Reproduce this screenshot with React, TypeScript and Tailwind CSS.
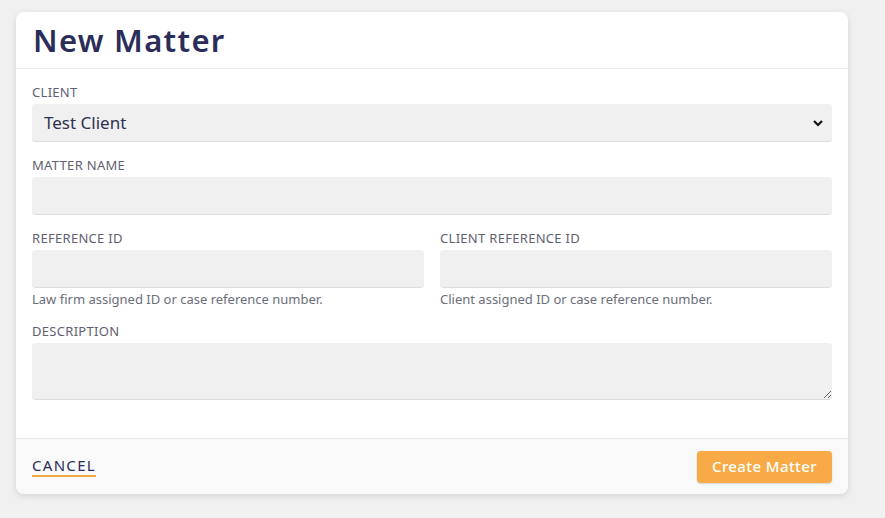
import React from 'react';

const font = { fontFamily: '"Noto Sans", "DejaVu Sans", sans-serif' };

function Label({ children }: { children: React.ReactNode }) {
  return <label className="block text-[13px] leading-[16px] uppercase tracking-[0.3px] text-[#5f6170] mb-[4px]">{children}</label>;
}

function Help({ children }: { children: React.ReactNode }) {
  return <p className="text-[13px] leading-[16px] text-[#6c6e7a] mt-[3px]">{children}</p>;
}

const inputCls =
  'block w-full h-[38px] rounded-[4px] bg-[#f0f0f0] border-0 border-b border-[#dddddd] px-[12px] text-[17px] text-[#2f3152] outline-none';

export default function App() {
  return (
    <div className="min-h-screen bg-[#f0f0f0] pt-[12px] pl-[16px] pr-[37px]" style={font}>
      <div className="bg-white rounded-[8px] shadow-[0_2px_6px_rgba(0,0,0,0.12)] overflow-hidden">
        <div className="h-[57px] px-[17px] flex items-center border-b border-[#ebebeb]">
          <h1 className="text-[31px] font-semibold text-[#2b2d59] tracking-[1.3px]">New Matter</h1>
        </div>

        <div className="px-[16px] pt-[15px] pb-[38px] flex flex-col">
          <div>
            <Label>Client</Label>
            <div className="relative">
              <select className={`${inputCls} appearance-none`} defaultValue="test">
                <option value="test">Test Client</option>
              </select>
              <svg className="absolute right-[8px] top-[14px] pointer-events-none" width="12" height="10" viewBox="0 0 12 10">
                <path d="M2 3 L6 7 L10 3" fill="none" stroke="#111" strokeWidth="2.2" />
              </svg>
            </div>
          </div>

          <div className="mt-[15px]">
            <Label>Matter Name</Label>
            <input className={inputCls} />
          </div>

          <div className="mt-[15px] grid grid-cols-2 gap-[16px]">
            <div>
              <Label>Reference ID</Label>
              <input className={inputCls} />
              <Help>Law firm assigned ID or case reference number.</Help>
            </div>
            <div>
              <Label>Client Reference ID</Label>
              <input className={inputCls} />
              <Help>Client assigned ID or case reference number.</Help>
            </div>
          </div>

          <div className="mt-[16px]">
            <Label>Description</Label>
            <textarea className="block w-full h-[57px] rounded-[4px] bg-[#f0f0f0] border-0 border-b border-[#dddddd] px-[12px] py-[8px] text-[16px] outline-none resize-y" />
          </div>
        </div>

        <div className="h-[56px] bg-[#f9f9f9] border-t border-[#ebebeb] px-[16px] flex items-center justify-between">
          <button className="text-[15px] text-[#2b2d59] uppercase tracking-[1.3px] border-b-[2px] border-[#f5a742] leading-[18px] pb-[1px]">Cancel</button>
          <button className="w-[135px] h-[32px] rounded-[4px] bg-[#f7aa45] text-white text-[15px] font-medium tracking-[0.4px] shadow-[0_1px_2px_rgba(0,0,0,0.15)]">Create Matter</button>
        </div>
      </div>
    </div>
  );
}
